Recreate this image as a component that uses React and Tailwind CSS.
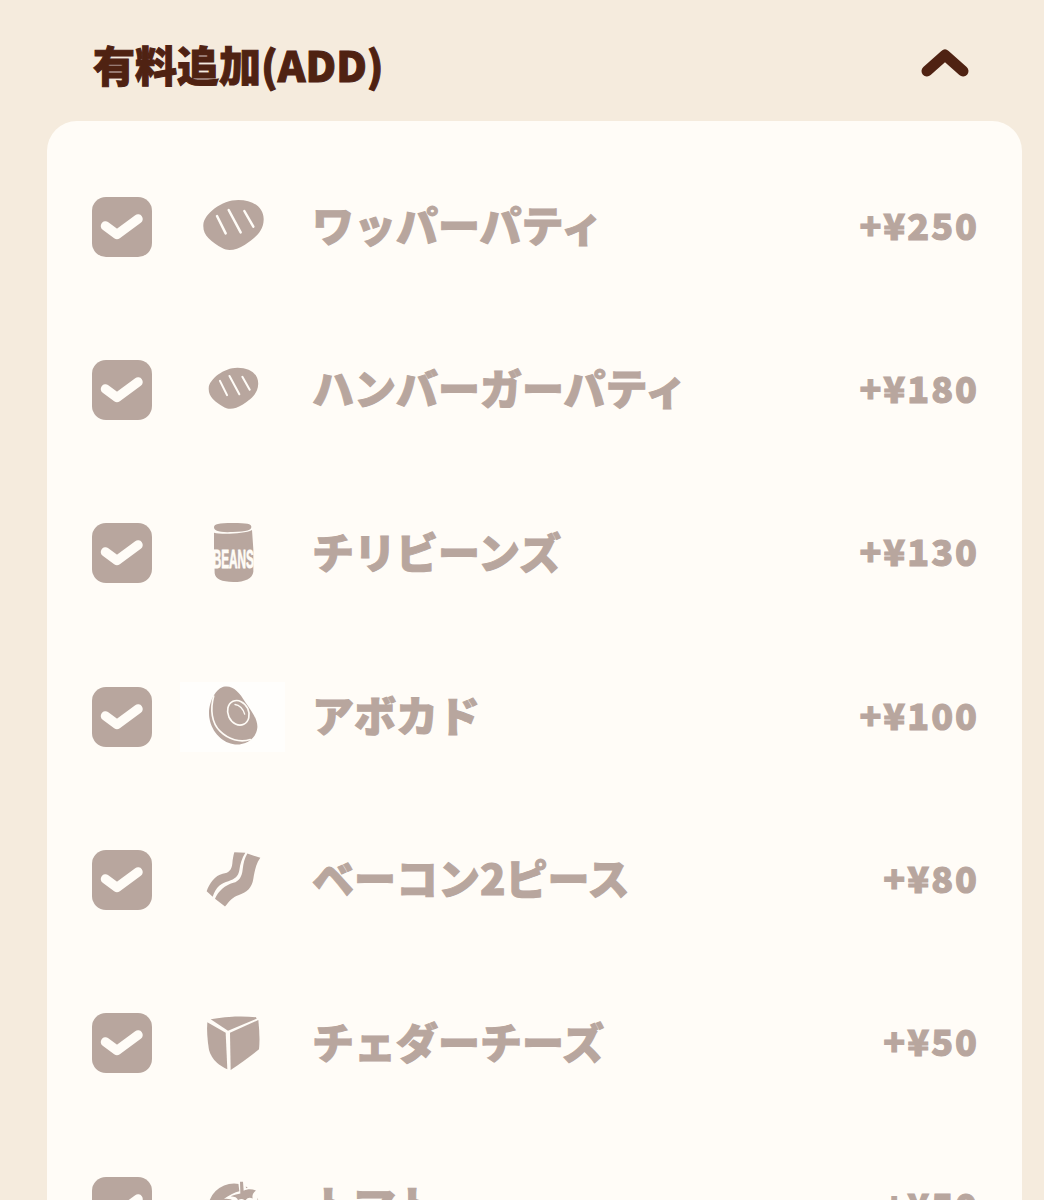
const FONT = '"Noto Sans CJK JP", "Noto Sans", sans-serif';
const MUTED = '#b8a69e';
const CARD = '#fffcf7';

function CheckBox() {
  return (
    <div className="w-[60px] h-[60px] shrink-0 rounded-[14px] bg-[#b8a69e]">
      <svg viewBox="0 0 60 60" className="w-full h-full">
        <path d="M13.5 29 L25 37.5 L46 22" fill="none" stroke={CARD} strokeWidth="9.5" strokeLinecap="round" strokeLinejoin="round" />
      </svg>
    </div>
  );
}

function PattyLines() {
  return (
    <g stroke={CARD} strokeWidth="7.5" strokeLinecap="round" fill="none">
      <path d="M411 111 L437 163" />
      <path d="M446 93 L482 160" />
      <path d="M493 96 L520 143" />
    </g>
  );
}

const PATTY_BODY = 'M370 137 C372 105 425 63 475 63 C520 63 552 85 551 122 C550 160 520 180 495 197 C470 213 445 217 428 208 C410 198 398 190 385 177 C375 166 369 155 370 137 Z';

function PattyLarge() {
  return (
    <svg viewBox="300 -15 315 315" className="w-full h-full">
      <path d={PATTY_BODY} fill={MUTED} />
      <PattyLines />
    </svg>
  );
}

function PattySmall() {
  return (
    <svg viewBox="300 472.5 315 315" className="w-full h-full">
      <g transform="translate(460 628) scale(0.82) translate(-460 -140)">
        <path d={PATTY_BODY} fill={MUTED} />
        <PattyLines />
      </g>
    </svg>
  );
}

function Beans() {
  return (
    <svg viewBox="30 -27 315 315" className="w-full h-full">
      <path d="M132 52 C132 42 145 39 188 39 C232 39 244 42 244 50 C244 60 232 64 188 66 C145 68 132 62 132 52 Z" fill={MUTED} />
      <path d="M132 68 C150 74 225 72 246 60 L250 118 L250 185 C248 205 225 216 190 216 C155 216 136 207 134 190 L132 118 Z" fill={MUTED} />
      <text x="128" y="173" fontFamily='"Liberation Sans", sans-serif' fontWeight="700" fontSize="78" textLength="124" lengthAdjust="spacingAndGlyphs" fill={CARD} stroke={CARD} strokeWidth="2.5">BEANS</text>
    </svg>
  );
}

function Avocado() {
  return (
    <svg viewBox="30 463.5 315 315" className="w-full h-full">
      <path d="M165 531 C190 528 208 548 226 578 C245 605 264 630 262 655 C258 690 225 707 195 705 C160 702 125 670 118 625 C112 585 135 535 165 531 Z" fill={MUTED} />
      <path d="M131 560 C120 600 125 640 150 665 C175 690 210 700 241 690" fill="none" stroke={CARD} strokeWidth="5" strokeLinecap="round" />
      <ellipse cx="205" cy="610" rx="31" ry="38" transform="rotate(-25 205 610)" fill="none" stroke={CARD} strokeWidth="5" />
      <path d="M195 585 C208 586 220 598 224 614" fill="none" stroke={CARD} strokeWidth="4" strokeLinecap="round" />
    </svg>
  );
}

function Bacon() {
  return (
    <svg viewBox="30 -37.5 315 315" className="w-full h-full" fill={MUTED}>
      <path d="M193 38 L226 40 C216 55 210 75 208 92 C205 110 195 118 175 125 C155 130 138 140 128 172 L110 155 C118 132 135 108 158 103 C178 100 185 90 187 72 C188 60 190 48 193 38 Z" />
      <path d="M232 42 L271 55 C258 72 254 95 250 118 C246 145 230 160 205 167 C188 172 178 185 165 201 L135 178 C145 155 165 137 190 130 C208 126 216 110 218 90 C220 72 224 55 232 42 Z" />
    </svg>
  );
}

function Cheese() {
  return (
    <svg viewBox="30 453 315 315" className="w-full h-full" fill={MUTED}>
      <path d="M122 538 C160 530 215 527 258 532 L260 536 L174 572 Z" />
      <path d="M112 547 L167 578 L172 688 C150 678 125 660 117 630 C112 600 110 570 112 547 Z" />
      <path d="M180 578 L265 540 C268 570 270 600 267 628 C240 650 210 672 182 690 Z" />
    </svg>
  );
}

function Tomato() {
  return (
    <svg viewBox="300 13.5 315 315" className="w-full h-full">
      <circle cx="462" cy="180" r="78" fill={MUTED} />
      <path d="M478 125 L474 92 L496 92 L498 116 C512 108 530 112 545 122 C532 132 530 140 534 160 C518 152 508 156 500 168 C490 158 480 158 468 166 C466 152 452 148 432 148 C448 136 465 128 478 125 Z" fill={CARD} />
      <path d="M481 132 L480 97 L489 97 L491 124 C502 118 514 118 528 123 C518 131 516 138 518 147 C508 142 501 145 496 154 C489 147 482 147 474 152 C472 144 465 141 452 140 C464 136 473 134 481 132 Z" fill={MUTED} />
    </svg>
  );
}

const ITEMS = [
  { name: 'ワッパーパティ', price: '+¥250', Icon: PattyLarge },
  { name: 'ハンバーガーパティ', price: '+¥180', Icon: PattySmall },
  { name: 'チリビーンズ', price: '+¥130', Icon: Beans },
  { name: 'アボカド', price: '+¥100', Icon: Avocado, white: true },
  { name: 'ベーコン2ピース', price: '+¥80', Icon: Bacon },
  { name: 'チェダーチーズ', price: '+¥50', Icon: Cheese },
  { name: 'トマト', price: '+¥50', Icon: Tomato },
];

function Row({ item }) {
  const { Icon } = item;
  return (
    <div className="h-[163.33px] flex items-center pl-[45px] pr-[43px]">
      <CheckBox />
      <div className="relative ml-[28px] w-[105px] h-[105px] shrink-0">
        {item.white && <div className="absolute left-0 right-0 top-[18px] h-[70px] bg-[#fffefc]" />}
        <div className="absolute inset-0">
          <Icon />
        </div>
      </div>
      <div className="ml-[27px] pb-[5px] flex-1 text-[42px] leading-none font-black text-[#b8a69e] [-webkit-text-stroke:1px_#b8a69e] whitespace-nowrap">{item.name}</div>
      <div className="pb-[6px] text-[36px] leading-none font-black tracking-[2px] text-[#b8a69e] [-webkit-text-stroke:1px_#b8a69e] whitespace-nowrap">{item.price}</div>
    </div>
  );
}

export default function App() {
  return (
    <div className="h-[1200px] overflow-hidden bg-[#f5ebdd]" style={{ fontFamily: FONT }}>
      <div className="h-[121px] flex items-center justify-between pl-[93px] pr-[75px]">
        <h2 className="mt-[6px] text-[42px] leading-none font-black text-[#4f2212] [-webkit-text-stroke:1px_#4f2212] whitespace-nowrap">有料追加(ADD)</h2>
        <svg viewBox="0 0 48 28" className="w-[48px] h-[28px] mb-[-4px]">
          <path d="M6 22 L24 6 L42 22" fill="none" stroke="#4f2212" strokeWidth="11" strokeLinecap="round" strokeLinejoin="round" />
        </svg>
      </div>
      <div className="ml-[47px] mr-[22px] rounded-[30px] bg-[#fffcf7] py-[24px]">
        {ITEMS.map((item) => (
          <Row key={item.name} item={item} />
        ))}
      </div>
    </div>
  );
}
